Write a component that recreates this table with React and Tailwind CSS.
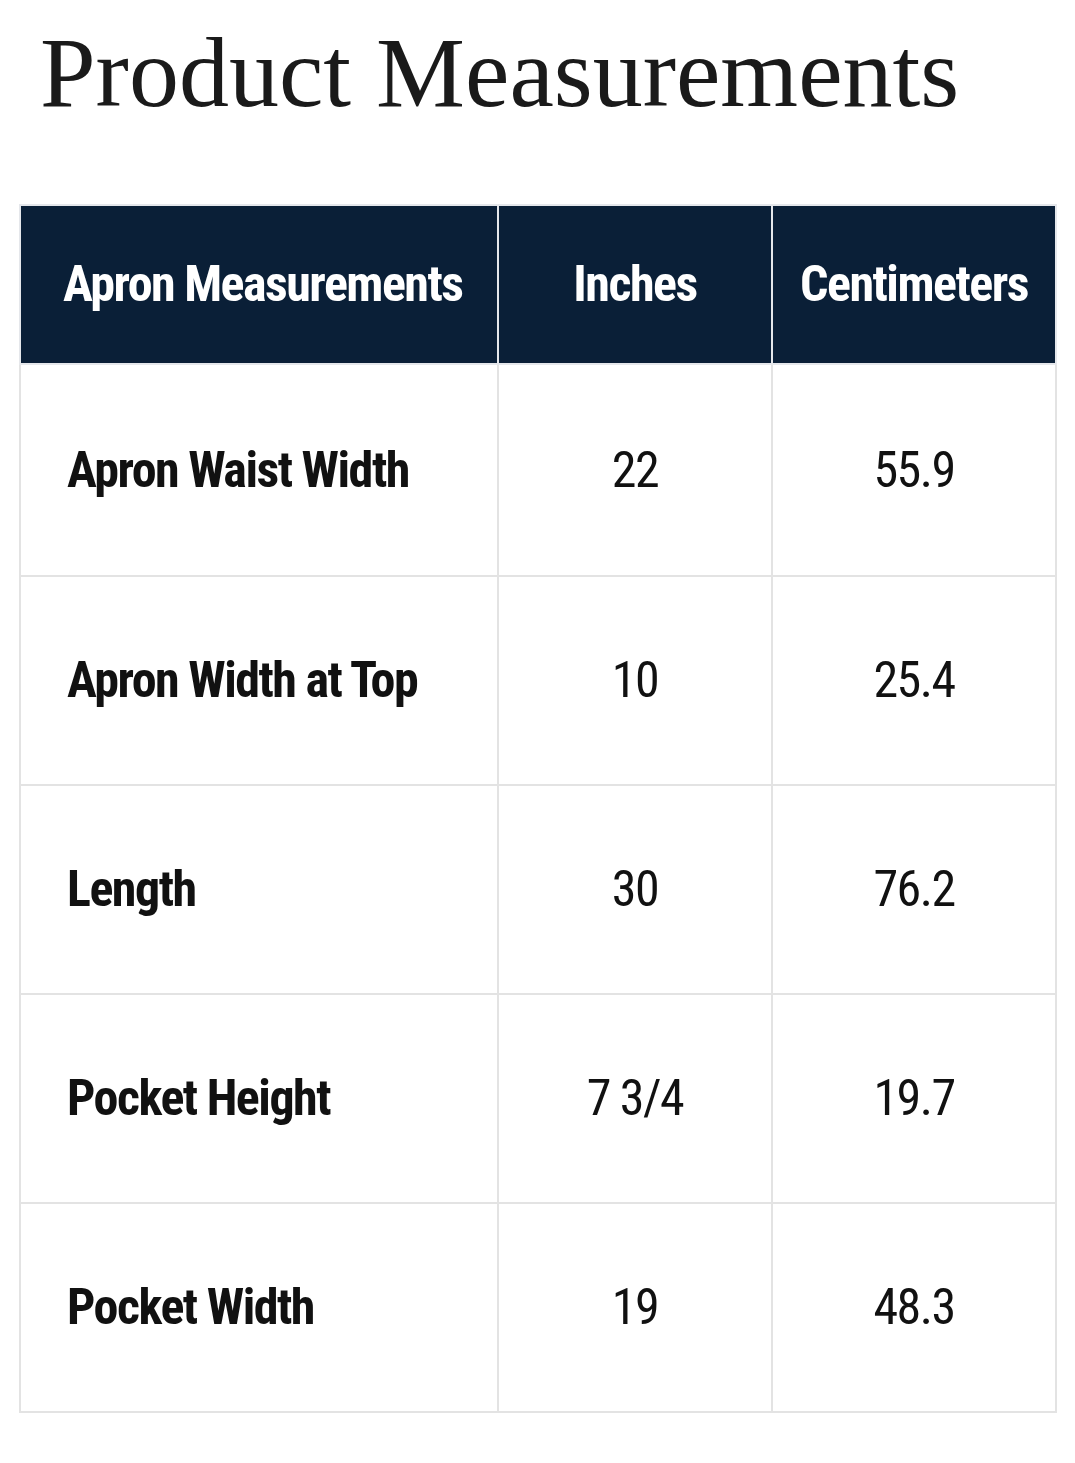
import React from "react";

const rows = [
  ["Apron Waist Width", "22", "55.9"],
  ["Apron Width at Top", "10", "25.4"],
  ["Length", "30", "76.2"],
  ["Pocket Height", "7 3/4", "19.7"],
  ["Pocket Width", "19", "48.3"],
];

const narrow = { fontFamily: '"Liberation Sans Narrow", "Roboto Condensed", "Liberation Sans", sans-serif' };

export default function App() {
  return (
    <div className="min-h-[1463px] w-[1075px] bg-white">
      <h1
        className="pl-[40px] pt-[18px] text-[100px] leading-[110px] text-[#1a1a1a]"
        style={{ fontFamily: '"Liberation Serif", "DejaVu Serif", serif' }}
      >
        Product Measurements
      </h1>
      <div className="pl-[19px] pt-[76px]">
        <table className="w-[1038px] border-collapse tracking-[-1.5px]" style={narrow}>
          <thead>
            <tr className="h-[159px] bg-[#0a1f37] text-white">
              <th className="w-[478px] whitespace-nowrap border-2 border-[#e5e7eb] pl-[42px] text-left text-[50px] font-bold">
                Apron Measurements
              </th>
              <th className="w-[274px] border-2 border-[#e5e7eb] text-center text-[50px] font-bold">
                Inches
              </th>
              <th className="border-2 border-[#e5e7eb] text-center text-[50px] font-bold">
                Centimeters
              </th>
            </tr>
          </thead>
          <tbody>
            {rows.map(([label, inch, cm], i) => (
              <tr key={label} className={`${i === 0 ? "h-[212px]" : "h-[209px]"} text-[#111]`}>
                <td className="border-2 border-[#e3e3e3] pl-[46px] text-[50px] font-bold">
                  {label}
                </td>
                <td className="border-2 border-[#e3e3e3] text-center text-[50px]">{inch}</td>
                <td className="border-2 border-[#e3e3e3] text-center text-[50px]">{cm}</td>
              </tr>
            ))}
          </tbody>
        </table>
      </div>
    </div>
  );
}
